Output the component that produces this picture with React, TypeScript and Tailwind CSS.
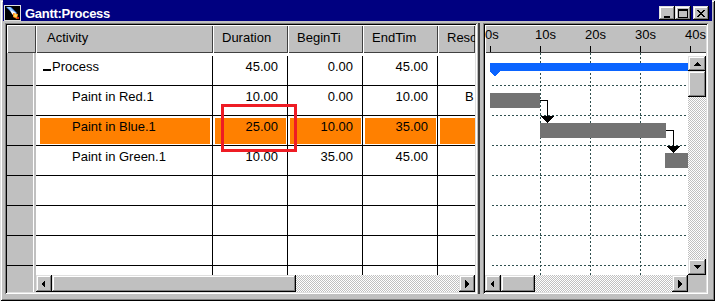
import React from "react";

const raised =
  "shadow-[inset_-1px_-1px_#000,inset_1px_1px_#dfdfdf,inset_-2px_-2px_#808080,inset_2px_2px_#fff]";
const sunken =
  "shadow-[inset_1px_1px_#808080,inset_-1px_-1px_#fff,inset_2px_2px_#000,inset_-2px_-2px_#dfdfdf]";
const headCell = "shadow-[inset_1px_1px_#fff,inset_-1px_-1px_#404040]";
const checker =
  "bg-[image:repeating-conic-gradient(#c0c0c0_0%_25%,#ffffff_0%_50%)] bg-[length:2px_2px]";

type Dir = "left" | "right" | "up" | "down";

const tri: Record<Dir, string> = {
  left: "5,0 1,4 5,8",
  right: "2,0 6,4 2,8",
  up: "0,6 4,2 8,6",
  down: "0,2 4,6 8,2",
};

const ScrollBtn = ({ dir, size }: { dir: Dir; size: string }) => (
  <div className={`flex flex-none items-center justify-center bg-[#c0c0c0] ${raised} ${size}`}>
    <svg width="8" height="8" viewBox="0 0 8 8" shapeRendering="crispEdges">
      <polygon points={tri[dir]} fill="#000" />
    </svg>
  </div>
);

// little comet logo in the title bar
const AppIcon = () => (
  <svg width="17" height="16" viewBox="0 0 17 16" className="flex-none">
    <rect width="17" height="16" fill="#dfdfdf" />
    <rect x="1" y="1" width="15" height="14" fill="#000" />
    <polygon points="2,2 7,2 13,8 11,11" fill="#3b7ff0" />
    <polygon points="3,2 6,2 12,8 10,9" fill="#9fd0ff" />
    <polygon points="6,5 12,8 11,12 8,9" fill="#ffffff" />
    <polygon points="9,8 14,9 13,14 9,12" fill="#ff8c1a" />
    <circle cx="11.5" cy="10.5" r="1.6" fill="#ffe060" />
    <rect x="13" y="12" width="2" height="2" fill="#d02a10" />
  </svg>
);

const TitleBtn = ({ kind }: { kind: "min" | "max" | "close" }) => (
  <div className={`flex h-[14px] w-[16px] flex-none items-center justify-center bg-[#c0c0c0] ${raised}`}>
    <svg width="10" height="9" viewBox="0 0 10 9" shapeRendering="crispEdges">
      {kind === "min" && <rect x="2" y="7" width="6" height="2" fill="#000" />}
      {kind === "max" && (
        <>
          <rect x="0.5" y="0.5" width="9" height="8" fill="none" stroke="#000" />
          <rect x="0" y="0" width="10" height="2" fill="#000" />
        </>
      )}
      {kind === "close" && (
        <path d="M1 1 L8 8 M2 1 L9 8 M8 1 L1 8 M9 1 L2 8" stroke="#000" strokeWidth="1" />
      )}
    </svg>
  </div>
);

type RowData = {
  name: string;
  d: string;
  b: string;
  e: string;
  r: string;
  top?: boolean;
  sel?: boolean;
};

const rows: RowData[] = [
  { name: "Process", d: "45.00", b: "0.00", e: "45.00", r: "", top: true },
  { name: "Paint in Red.1", d: "10.00", b: "0.00", e: "10.00", r: "B" },
  { name: "Paint in Blue.1", d: "25.00", b: "10.00", e: "35.00", r: "", sel: true },
  { name: "Paint in Green.1", d: "10.00", b: "35.00", e: "45.00", r: "" },
  { name: "", d: "", b: "", e: "", r: "" },
  { name: "", d: "", b: "", e: "", r: "" },
  { name: "", d: "", b: "", e: "", r: "" },
  { name: "", d: "", b: "", e: "", r: "" },
];

const NumCell = ({ v, sel }: { v: string; sel?: boolean }) => (
  <div className="h-full w-[75px] flex-none border-r border-black pt-[2px] pb-[1px] pl-[2px] pr-[1px]">
    <div className={`h-full pt-px pr-[8px] text-right ${sel ? "bg-[#ff8000]" : ""}`}>{v}</div>
  </div>
);

const TableRow = ({ r }: { r: RowData }) => (
  <div className="flex h-[30px] flex-none border-b border-black text-[13px] leading-[15px]">
    <div className="h-full w-[177px] flex-none border-r border-black pt-[2px] pb-[1px] pl-[4px] pr-[2px]">
      <div className={`h-full pt-px ${r.sel ? "bg-[#ff8000]" : ""} ${r.top ? "pl-[3px]" : "pl-[32px]"}`}>
        {r.top && <span className="mr-px inline-block h-[2px] w-[8px] bg-black" />}
        {r.name}
      </div>
    </div>
    <NumCell v={r.d} sel={r.sel} />
    <NumCell v={r.b} sel={r.sel} />
    <NumCell v={r.e} sel={r.sel} />
    <div className="h-full min-w-0 flex-1 overflow-hidden pt-[2px] pb-[1px] pl-[2px]">
      <div className={`h-full overflow-hidden pt-px pl-[25px] whitespace-nowrap ${r.sel ? "bg-[#ff8000]" : ""}`}>
        {r.r}
      </div>
    </div>
  </div>
);

const TablePane = () => (
  <div className={`h-[271px] w-[472px] flex-none bg-[#c0c0c0] p-[2px] ${sunken}`}>
    <div className="flex h-full flex-col overflow-hidden">
      <div className="flex h-[28px] flex-none text-[13px] leading-[15px]">
        <div className={`w-[29px] flex-none ${headCell}`} />
        <div className={`w-[177px] flex-none pt-[5px] pl-[11px] ${headCell}`}>Activity</div>
        <div className={`w-[75px] flex-none pt-[5px] pl-[9px] ${headCell}`}>Duration</div>
        <div className={`w-[75px] flex-none pt-[5px] pl-[9px] ${headCell}`}>BeginTi</div>
        <div className={`w-[75px] flex-none pt-[5px] pl-[9px] ${headCell}`}>EndTim</div>
        <div className={`min-w-0 flex-1 overflow-hidden pt-[5px] pl-[9px] whitespace-nowrap ${headCell}`}>
          Reso
        </div>
      </div>
      <div className="flex min-h-0 flex-1">
        <div className="flex w-[29px] flex-none">
          <div className="flex w-[26px] flex-none flex-col overflow-hidden pt-[3px]">
            {rows.map((_, i) => (
              <div key={i} className="h-[30px] flex-none border-b border-black" />
            ))}
          </div>
          <div className="w-px flex-none bg-white" />
        </div>
        <div className="flex min-w-0 flex-1 flex-col">
          <div className="min-h-0 flex-1 overflow-hidden bg-white pt-[3px]">
            {rows.map((r, i) => (
              <TableRow key={i} r={r} />
            ))}
          </div>
          <div className="flex h-[17px] flex-none">
            <ScrollBtn dir="left" size="w-[16px] h-[17px]" />
            <div className={`h-[17px] w-[244px] flex-none bg-[#c0c0c0] ${raised}`} />
            <div className={`h-[17px] flex-1 ${checker}`} />
            <ScrollBtn dir="right" size="w-[16px] h-[17px]" />
          </div>
        </div>
      </div>
    </div>
  </div>
);

const hLines = [32, 62, 92, 122, 152, 182, 212];
const vLines = [55, 105, 155];

const Chart = () => (
  <svg width="203" height="222" className="block flex-none" shapeRendering="crispEdges">
    {vLines.map((x) => (
      <line key={x} x1={x + 0.5} y1={0} x2={x + 0.5} y2={222} stroke="#2f4f4f" strokeDasharray="2 2" />
    ))}
    {hLines.map((y) => (
      <line key={y} x1={7} y1={y + 0.5} x2={203} y2={y + 0.5} stroke="#2f4f4f" strokeDasharray="2 2" />
    ))}
    <rect x="5" y="10" width="200" height="8" fill="#0a64ff" />
    <polygon points="5,18 15,18 10,24" fill="#0a64ff" />
    <rect x="5" y="40" width="50" height="15" fill="#737373" />
    <rect x="55" y="70" width="126" height="15" fill="#737373" />
    <rect x="180" y="100" width="30" height="15" fill="#737373" />
    <polyline points="55,47.5 62.5,47.5 62.5,63" fill="none" stroke="#000" />
    <polygon points="56,63 69,63 62.5,70" fill="#000" />
    <polyline points="181,77.5 188.5,77.5 188.5,93" fill="none" stroke="#000" />
    <polygon points="182,93 195,93 188.5,100" fill="#000" />
  </svg>
);

const ticks = [0, 10, 20, 30, 40];

const GanttPane = () => (
  <div className={`h-[271px] w-[225px] flex-none bg-[#c0c0c0] p-[2px] ${sunken}`}>
    <div className="flex h-full flex-col overflow-hidden">
      <div className="relative h-[28px] flex-none overflow-hidden text-[13px] leading-[15px] shadow-[inset_1px_1px_#fff,inset_0_-1px_#404040]">
        {ticks.map((s, i) => (
          <React.Fragment key={s}>
            <span className="absolute top-[2px]" style={{ left: i * 50 }}>
              {s}s
            </span>
            <div className="absolute top-[21px] h-[6px] w-px bg-black" style={{ left: 5 + i * 50 }} />
          </React.Fragment>
        ))}
      </div>
      <div className="flex flex-none bg-white">
        <Chart />
        <div className="flex h-[222px] w-[18px] flex-none flex-col pt-[3px]">
          <ScrollBtn dir="up" size="w-[18px] h-[15px]" />
          <div className={`h-[26px] w-[18px] flex-none bg-[#c0c0c0] ${raised}`} />
          <div className={`w-[18px] flex-1 ${checker}`} />
          <ScrollBtn dir="down" size="w-[18px] h-[16px]" />
        </div>
      </div>
      <div className="flex h-[17px] flex-none">
        <ScrollBtn dir="left" size="w-[16px] h-[17px]" />
        <div className={`h-[17px] w-[34px] flex-none bg-[#c0c0c0] ${raised}`} />
        <div className={`h-[17px] flex-1 ${checker}`} />
        <ScrollBtn dir="right" size="w-[16px] h-[17px]" />
        <div className="h-[17px] w-[18px] flex-none bg-[#c0c0c0]" />
      </div>
    </div>
  </div>
);

export default function App() {
  return (
    <div
      className={`relative flex h-[301px] w-[715px] flex-col bg-[#c0c0c0] px-[3px] font-['Liberation_Sans',Arial,sans-serif] text-black shadow-[inset_1px_1px_#dfdfdf,inset_-1px_-1px_#000,inset_2px_2px_#fff,inset_-2px_-2px_#808080]`}
    >
      <div className="flex h-[21px] flex-none items-center bg-[#000080] pt-[5px] pr-[3px] pl-[1px]">
        <AppIcon />
        <span className="ml-[4px] text-[13px] font-bold leading-[15px] tracking-[-0.3px] text-white">
          Gantt:Process
        </span>
        <div className="ml-auto flex items-center">
          <TitleBtn kind="min" />
          <TitleBtn kind="max" />
          <div className="ml-[2px]">
            <TitleBtn kind="close" />
          </div>
        </div>
      </div>
      <div className="mt-[2px] flex pl-[2px]">
        <TablePane />
        <div className="flex w-[6px] flex-none pl-[1px]">
          <div className="w-[2px] bg-[#404040]" />
        </div>
        <GanttPane />
      </div>
      <div className="absolute top-[104px] left-[221px] h-[48px] w-[76px] border-[3px] border-[#ee1c24]" />
    </div>
  );
}
